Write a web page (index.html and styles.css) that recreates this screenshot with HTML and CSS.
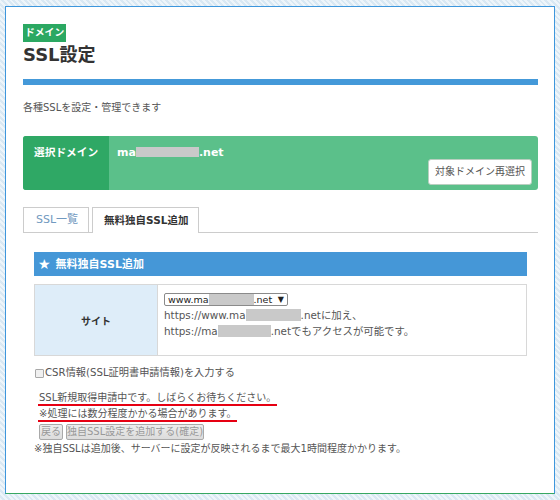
FILE: index.html
```html
<!DOCTYPE html>
<html lang="ja">
<head>
<meta charset="utf-8">
<title>SSL設定</title>
<link rel="stylesheet" href="styles.css">
</head>
<body>
<div class="card">
  <div class="badge-row"><span class="badge">ドメイン</span></div>
  <h1 class="title">SSL設定</h1>
  <div class="bar"></div>
  <p class="desc">各種SSLを設定・管理できます</p>

  <div class="domain">
    <div class="domain-label">選択ドメイン</div>
    <div class="domain-main">
      <div class="domain-value">ma<span class="mask mask-domain"></span>.net</div>
      <button class="btn-reselect" type="button">対象ドメイン再選択</button>
    </div>
  </div>

  <div class="tabs">
    <div class="tab">SSL一覧</div>
    <div class="tab tab-active">無料独自SSL追加</div>
  </div>

  <div class="section">
    <div class="sec-head"><span class="star">★</span>無料独自SSL追加</div>
    <div class="site-table">
      <div class="site-label">サイト</div>
      <div class="site-body">
        <div class="select"><span>www.ma</span><span class="mask mask-select"></span><span>.net</span><span class="arrow">▼</span></div>
        <div class="line">https://www.ma<span class="mask mask-l1"></span>.netに加え、</div>
        <div class="line">https://ma<span class="mask mask-l2"></span>.netでもアクセスが可能です。</div>
      </div>
    </div>

    <div class="csr"><span class="cb"></span>CSR情報(SSL証明書申請情報)を入力する</div>

    <div class="status">
      <span class="status-line">SSL新規取得申請中です。しばらくお待ちください。</span>
      <span class="status-line">※処理には数分程度かかる場合があります。</span>
    </div>

    <div class="actions">
      <button class="btn" type="button" disabled>戻る</button>
      <button class="btn btn-wide" type="button" disabled>独自SSL設定を追加する(確定)</button>
    </div>

    <p class="note">※独自SSLは追加後、サーバーに設定が反映されるまで最大1時間程度かかります。</p>
  </div>
</div>
</body>
</html>
```

FILE: styles.css
```css
html, body {
  margin: 0;
  padding: 0;
}
body {
  width: 560px;
  height: 500px;
  overflow: hidden;
  padding-top: 6px;
  box-sizing: border-box;
  font-family: "DejaVu Sans", "Noto Sans CJK JP", sans-serif;
  color: #555;
  background: repeating-linear-gradient(45deg, #eef5fa 0 2px, #d9e8f3 2px 4px);
}
.card {
  margin-left: 5px;
  width: 550px;
  height: 488px;
  box-sizing: border-box;
  border: 1px solid #3d96dc;
  border-bottom-color: #37a862;
  background: #fff;
  padding: 17px 16px 0 17px;
}
.badge-row {
  height: 18px;
  line-height: 18px;
}
.badge {
  display: inline-block;
  height: 18px;
  line-height: 18px;
  padding: 0 2px;
  background: #2ba862;
  color: #fff;
  font-weight: bold;
  font-size: 9.8px;
  vertical-align: top;
}
.title {
  margin: 2px 0 0;
  font-size: 18px;
  line-height: 22px;
  font-weight: bold;
  color: #333;
}
.bar {
  margin-top: 13px;
  height: 6px;
  background: #4499d9;
}
.desc {
  margin: 16px 0 0;
  font-size: 10px;
  line-height: 14px;
  color: #555;
}
.domain {
  margin-top: 21px;
  display: flex;
  height: 54px;
  border-radius: 3px;
  overflow: hidden;
  background: #5bc08a;
}
.domain-label {
  width: 86px;
  box-sizing: border-box;
  background: #2fa865;
  color: #fff;
  font-weight: bold;
  font-size: 10.7px;
  line-height: 14px;
  padding: 10px 0 0 11px;
}
.domain-main {
  flex: 1;
  display: flex;
  flex-direction: column;
  padding: 10px 6px 5px 8px;
}
.domain-value {
  color: #fff;
  font-weight: bold;
  font-size: 11px;
  line-height: 13px;
  height: 13px;
}
.mask {
  display: inline-block;
  background: #c9c9c9;
  vertical-align: middle;
}
.mask-domain {
  width: 63px;
  height: 10px;
  vertical-align: -1px;
}
.btn-reselect {
  align-self: flex-end;
  height: 26px;
  box-sizing: border-box;
  padding: 0 6px;
  border: 1px solid #b9cfc0;
  border-radius: 3px;
  background: #fff;
  color: #555;
  font-family: inherit;
  font-size: 10px;
  line-height: 24px;
}
.tabs {
  margin-top: 17px;
  display: flex;
  align-items: flex-start;
  gap: 3px;
  height: 26px;
  box-sizing: border-box;
  border-bottom: 1px solid #ccc;
}
.tab {
  height: 25px;
  box-sizing: border-box;
  border: 1px solid #ccc;
  border-bottom: none;
  background: #fff;
  line-height: 24px;
  font-size: 11px;
  padding: 0 10px 0 12px;
  color: #7199c0;
}
.tab-active {
  height: 26px;
  margin-bottom: -1px;
  padding: 0 10px 0 11px;
  font-size: 10.5px;
  font-weight: bold;
  color: #333;
}
.section {
  margin-top: 19px;
  padding: 0 11px;
}
.sec-head {
  height: 24px;
  line-height: 24px;
  background: #4597d7;
  color: #fff;
  font-weight: bold;
  font-size: 11px;
  padding-left: 4px;
}
.star {
  font-size: 14px;
  margin-right: 5px;
  vertical-align: -1px;
}
.site-table {
  margin-top: 8px;
  display: flex;
  height: 72px;
  box-sizing: border-box;
  border: 1px solid #d8d8d8;
}
.site-label {
  width: 123px;
  box-sizing: border-box;
  background: #deedf9;
  border-right: 1px solid #d8d8d8;
  display: flex;
  align-items: center;
  justify-content: center;
  font-weight: bold;
  font-size: 10px;
  color: #333;
}
.site-body {
  flex: 1;
  padding: 8px 6px 0;
  font-size: 10.4px;
  line-height: 16px;
  color: #555;
}
.select {
  display: flex;
  align-items: center;
  width: 124px;
  height: 13px;
  box-sizing: border-box;
  border: 1px solid #8a8a8a;
  border-radius: 2px;
  padding: 0 3px;
  font-size: 9.5px;
  line-height: 11px;
  color: #222;
  margin-bottom: 1px;
}
.mask-select {
  width: 45px;
  height: 11px;
}
.arrow {
  margin-left: auto;
  font-size: 8px;
}
.mask-l1 {
  width: 55px;
  height: 12px;
  vertical-align: -2px;
}
.mask-l2 {
  width: 53px;
  height: 12px;
  vertical-align: -2px;
}
.csr {
  margin-top: 10px;
  display: flex;
  align-items: center;
  font-size: 10.2px;
  line-height: 14px;
  color: #555;
}
.cb {
  width: 7px;
  height: 7px;
  border: 1px solid #a8a8a8;
  background: #f0f0f0;
  border-radius: 1px;
  margin: 0 1px 0 1px;
}
.status {
  margin-top: 12px;
  padding-left: 4px;
  display: flex;
  flex-direction: column;
  align-items: flex-start;
  gap: 2px;
}
.status-line {
  font-size: 10px;
  line-height: 12px;
  padding: 0 1px;
  border-bottom: 2px solid #e60012;
  color: #555;
}
.actions {
  margin-top: 2px;
  padding-left: 5px;
  display: flex;
  gap: 3px;
}
.btn {
  height: 16px;
  box-sizing: border-box;
  padding: 0 1px;
  border: 1px solid #a9a9a9;
  border-radius: 2px;
  background: linear-gradient(#ededed, #dcdcdc);
  color: #999;
  font-family: inherit;
  font-size: 10px;
  line-height: 14px;
}
.btn-wide {
  padding: 0;
}
.note {
  margin: 2px 0 0;
  font-size: 10px;
  line-height: 14px;
  color: #555;
}
```
